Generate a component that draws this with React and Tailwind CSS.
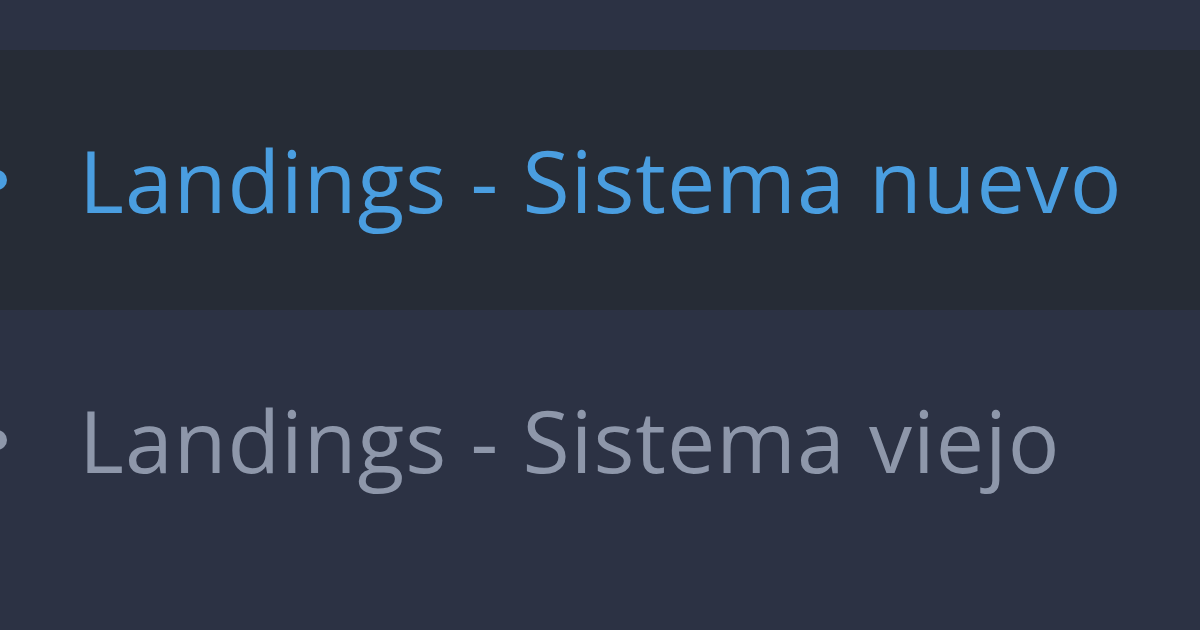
import React from "react";

const items = [
  { label: "Landings - Sistema nuevo", active: true },
  { label: "Landings - Sistema viejo", active: false },
];

export default function App() {
  return (
    <div
      className="w-[1200px] h-[630px] overflow-hidden bg-[#2c3244]"
      style={{ fontFamily: '"Open Sans", sans-serif' }}
    >
      {/* tail of the previous menu entry */}
      <div className="h-[50px]" />

      {items.map((item) => (
        <div
          key={item.label}
          className={
            "h-[260px] flex items-center " +
            (item.active ? "bg-[#262c36]" : "bg-[#2c3244]")
          }
        >
          <span
            className={
              "ml-[-13px] w-5 h-5 rounded-full shrink-0 " +
              (item.active ? "bg-[#4a9ee0]" : "bg-[#8e97aa]")
            }
          />
          <span
            className={
              "ml-[72px] text-[86px] leading-none tracking-[1px] whitespace-nowrap " +
              (item.active ? "text-[#4a9ee0]" : "text-[#8e97aa]")
            }
          >
            {item.label}
          </span>
        </div>
      ))}
    </div>
  );
}
